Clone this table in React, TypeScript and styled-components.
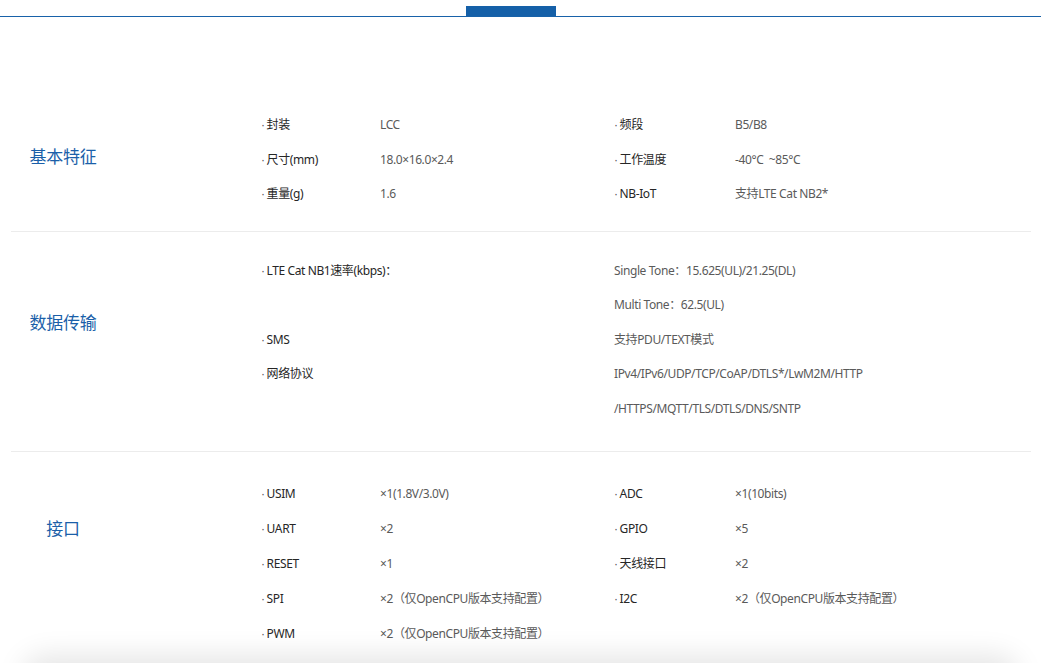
import React from "react";
import styled, { createGlobalStyle } from "styled-components";

const Global = createGlobalStyle`
  html, body { margin: 0; padding: 0; background: #fff; }
  body {
    font-family: "Noto Sans", "Noto Sans CJK SC", sans-serif;
    color: #333;
    overflow: hidden;
  }
`;

const Page = styled.div`
  width: 1041px;
  height: 663px;
  overflow: hidden;
`;

const Header = styled.div`
  height: 16px;
  border-bottom: 1px solid #1862a9;
  display: flex;
  align-items: flex-end;
  padding-left: 466px;
`;

const Tab = styled.div`
  width: 90px;
  height: 10px;
  background: #1560a8;
`;

const Specs = styled.div`
  margin: 69px 10px 0 11px;
`;

const Section = styled.section<{ $pt: number; $pb: number; $last?: boolean }>`
  display: grid;
  grid-template-columns: 250px 1fr;
  padding: ${(p) => p.$pt}px 0 ${(p) => p.$pb}px;
  border-bottom: ${(p) => (p.$last ? "none" : "1px solid #ececec")};
`;

const Title = styled.h3<{ $top: number }>`
  margin: 0;
  width: 104px;
  padding-top: ${(p) => p.$top}px;
  text-align: center;
  font-family: "Noto Sans CJK SC", sans-serif;
  font-size: 17px;
  line-height: 24px;
  font-weight: 400;
  color: #1b5fa9;
  letter-spacing: -0.2px;
`;

const Items = styled.div<{ $row: number }>`
  display: grid;
  grid-template-columns: 119px 234px 121px 1fr;
  grid-auto-rows: ${(p) => p.$row}px;
  align-items: center;
  font-size: 12px;
  line-height: 18px;
  letter-spacing: -0.4px;
`;

const Label = styled.div<{ $col: number; $row: number }>`
  grid-column: ${(p) => p.$col};
  grid-row: ${(p) => p.$row};
  color: #262626;
  white-space: nowrap;
  &::before {
    content: "·";
    font-family: "Liberation Sans", sans-serif;
    margin-right: 2px;
    color: #555;
  }
`;

const Value = styled.div<{ $col: number; $row: number }>`
  grid-column: ${(p) => p.$col};
  grid-row: ${(p) => p.$row};
  color: #5a5a5a;
  white-space: nowrap;
`;

const BottomShade = styled.div`
  position: fixed;
  left: 30px;
  right: 30px;
  bottom: -30px;
  height: 30px;
  box-shadow: 0 0 28px 8px rgba(0, 0, 0, 0.1);
  background: #eee;
  border-radius: 20px;
`;

type Cell = { kind: "l" | "v"; text: string; col: number; row: number };

const sections: {
  title: string;
  top: number;
  pt: number;
  pb: number;
  row: number;
  cells: Cell[];
}[] = [
  {
    title: "基本特征",
    top: 36,
    pt: 22,
    pb: 19,
    row: 34.5,
    cells: [
      { kind: "l", text: "封装", col: 1, row: 1 },
      { kind: "v", text: "LCC", col: 2, row: 1 },
      { kind: "l", text: "频段", col: 3, row: 1 },
      { kind: "v", text: "B5/B8", col: 4, row: 1 },
      { kind: "l", text: "尺寸(mm)", col: 1, row: 2 },
      { kind: "v", text: "18.0×16.0×2.4", col: 2, row: 2 },
      { kind: "l", text: "工作温度", col: 3, row: 2 },
      { kind: "v", text: "-40°C\u00a0 ~85°C", col: 4, row: 2 },
      { kind: "l", text: "重量(g)", col: 1, row: 3 },
      { kind: "v", text: "1.6", col: 2, row: 3 },
      { kind: "l", text: "NB-IoT", col: 3, row: 3 },
      { kind: "v", text: "支持LTE Cat NB2*", col: 4, row: 3 },
    ],
  },
  {
    title: "数据传输",
    top: 56,
    pt: 22,
    pb: 25,
    row: 34.5,
    cells: [
      { kind: "l", text: "LTE Cat NB1速率(kbps)：", col: 1, row: 1 },
      { kind: "v", text: "Single Tone：15.625(UL)/21.25(DL)", col: 3, row: 1 },
      { kind: "v", text: "Multi Tone：62.5(UL)", col: 3, row: 2 },
      { kind: "l", text: "SMS", col: 1, row: 3 },
      { kind: "v", text: "支持PDU/TEXT模式", col: 3, row: 3 },
      { kind: "l", text: "网络协议", col: 1, row: 4 },
      { kind: "v", text: "IPv4/IPv6/UDP/TCP/CoAP/DTLS*/LwM2M/HTTP", col: 3, row: 4 },
      { kind: "v", text: "/HTTPS/MQTT/TLS/DTLS/DNS/SNTP", col: 3, row: 5 },
    ],
  },
  {
    title: "接口",
    top: 40,
    pt: 24,
    pb: 24,
    row: 35,
    cells: [
      { kind: "l", text: "USIM", col: 1, row: 1 },
      { kind: "v", text: "×1(1.8V/3.0V)", col: 2, row: 1 },
      { kind: "l", text: "ADC", col: 3, row: 1 },
      { kind: "v", text: "×1(10bits)", col: 4, row: 1 },
      { kind: "l", text: "UART", col: 1, row: 2 },
      { kind: "v", text: "×2", col: 2, row: 2 },
      { kind: "l", text: "GPIO", col: 3, row: 2 },
      { kind: "v", text: "×5", col: 4, row: 2 },
      { kind: "l", text: "RESET", col: 1, row: 3 },
      { kind: "v", text: "×1", col: 2, row: 3 },
      { kind: "l", text: "天线接口", col: 3, row: 3 },
      { kind: "v", text: "×2", col: 4, row: 3 },
      { kind: "l", text: "SPI", col: 1, row: 4 },
      { kind: "v", text: "×2（仅OpenCPU版本支持配置）", col: 2, row: 4 },
      { kind: "l", text: "I2C", col: 3, row: 4 },
      { kind: "v", text: "×2（仅OpenCPU版本支持配置）", col: 4, row: 4 },
      { kind: "l", text: "PWM", col: 1, row: 5 },
      { kind: "v", text: "×2（仅OpenCPU版本支持配置）", col: 2, row: 5 },
    ],
  },
];

export default function App() {
  return (
    <Page>
      <Global />
      <Header>
        <Tab />
      </Header>
      <Specs>
        {sections.map((s, i) => (
          <Section key={s.title} $pt={s.pt} $pb={s.pb} $last={i === sections.length - 1}>
            <Title $top={s.top}>{s.title}</Title>
            <Items $row={s.row}>
              {s.cells.map((c, j) =>
                c.kind === "l" ? (
                  <Label key={j} $col={c.col} $row={c.row}>
                    {c.text}
                  </Label>
                ) : (
                  <Value key={j} $col={c.col} $row={c.row}>
                    {c.text}
                  </Value>
                )
              )}
            </Items>
          </Section>
        ))}
      </Specs>
      <BottomShade />
    </Page>
  );
}
